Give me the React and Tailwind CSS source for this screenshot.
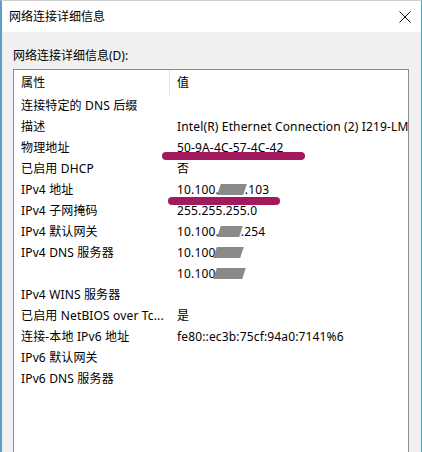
import React from "react";

const font = { fontFamily: '"Noto Sans", "Noto Sans CJK SC", sans-serif' };

const Smudge = ({ w = "w-[26px]" }) => (
  <span className={`inline-block ${w} h-[11px] bg-[#8a8a8a] -skew-x-[18deg] align-[-1px]`} />
);

const rows = [
  ["连接特定的 DNS 后缀", ""],
  ["描述", "Intel(R) Ethernet Connection (2) I219-LM"],
  ["物理地址", "50-9A-4C-57-4C-42"],
  ["已启用 DHCP", "否"],
  ["IPv4 地址", <>10.100.<Smudge w="w-[26px]" />.103</>],
  ["IPv4 子网掩码", "255.255.255.0"],
  ["IPv4 默认网关", <>10.100.<Smudge w="w-[22px]" />.254</>],
  ["IPv4 DNS 服务器", <>10.100<Smudge w="w-[27px]" /></>],
  ["", <>10.100<Smudge w="w-[29px]" /></>],
  ["IPv4 WINS 服务器", ""],
  ["已启用 NetBIOS over Tc...", "是"],
  ["连接-本地 IPv6 地址", "fe80::ec3b:75cf:94a0:7141%6"],
  ["IPv6 默认网关", ""],
  ["IPv6 DNS 服务器", ""],
];

export default function App() {
  return (
    <div
      className="w-[422px] h-[452px] overflow-hidden flex flex-col border-l-2 border-l-[#5f9cc6] border-r border-r-[#4aa3b5] border-t border-t-[#cfcfcf] text-[12px] text-black"
      style={font}
    >
      {/* Title bar */}
      <div className="h-[31px] bg-white flex items-center justify-between pl-[7px] pr-[9px] shrink-0">
        <span className="leading-none">网络连接详细信息</span>
        <svg width="12" height="12" viewBox="0 0 12 12" className="mr-[1px]">
          <path d="M0.5 0.5 L11.5 11.5 M11.5 0.5 L0.5 11.5" stroke="#111" strokeWidth="1" />
        </svg>
      </div>

      {/* Body */}
      <div className="flex-1 bg-[#f0f0f0] pl-[11px] pr-[12px] pt-[16px] flex flex-col">
        <div className="leading-[16px] mb-[5px]">网络连接详细信息(D):</div>
        <div className="relative border border-[#8a8d93] bg-white h-[420px] overflow-hidden tracking-[0.15px]">
          {/* Header */}
          <div className="grid grid-cols-[156px_1fr] h-[25px] items-center">
            <div className="pl-[7px] h-full flex items-center border-r border-[#e3e3e3]">属性</div>
            <div className="pl-[7px]">值</div>
          </div>
          {rows.map(([k, v], i) => (
            <div key={i} className="grid grid-cols-[156px_1fr] h-[21px] items-center whitespace-nowrap">
              <div className="pl-[7px] overflow-hidden">{k}</div>
              <div className="pl-[7px] overflow-hidden">{v}</div>
            </div>
          ))}

          {/* redaction strokes */}
          <div className="absolute left-[148px] top-[82px] w-[143px] h-[8px] rounded-full bg-[#a3195e]" />
          <div className="absolute left-[154px] top-[127px] w-[112px] h-[8px] rounded-full bg-[#a3195e]" />
        </div>
      </div>
    </div>
  );
}
